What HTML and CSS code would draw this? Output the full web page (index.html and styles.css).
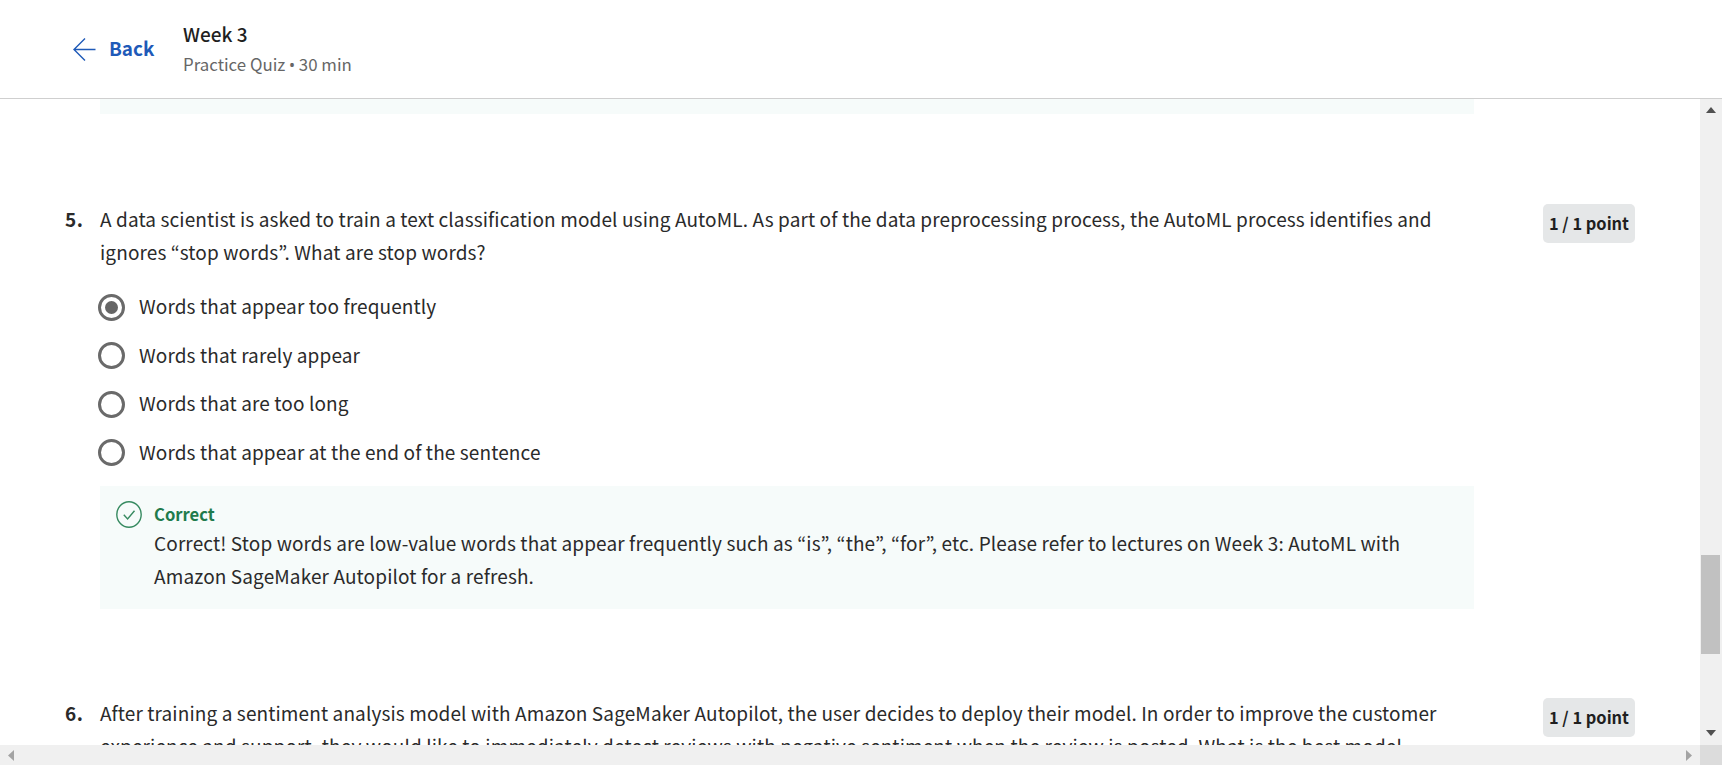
FILE: index.html
```
<!DOCTYPE html>
<html lang="en">
<head>
<meta charset="utf-8">
<title>Week 3 – Practice Quiz</title>
<link rel="stylesheet" href="styles.css">
</head>
<body>
<div class="app">
  <header class="header">
    <a class="back">
      <svg class="back-icon" width="23" height="24" viewBox="0 0 23 24" fill="none" stroke="currentColor" stroke-width="1.4"><path d="M22.5 12.5H1.2M12 1.500 1 12.500l11 11"/></svg>
      <span class="back-label">Back</span>
    </a>
    <div class="titles">
      <h1 class="title">Week 3</h1>
      <p class="subtitle">Practice Quiz <span class="dot">•</span> 30 min</p>
    </div>
  </header>
  <div class="body">
    <main class="content">
      <div class="feedback-tail"></div>
      <section class="question">
        <div class="number">5.</div>
        <div class="main">
          <p class="prompt"><span class="line">A data scientist is asked to train a text classification model using AutoML. As part of the data preprocessing process, the AutoML process identifies and</span> <span class="line">ignores “stop words”. What are stop words?</span></p>
          <div class="options">
            <label class="option"><span class="radio checked"></span><span class="option-text">Words that appear too frequently</span></label>
            <label class="option"><span class="radio"></span><span class="option-text">Words that rarely appear</span></label>
            <label class="option"><span class="radio"></span><span class="option-text">Words that are too long</span></label>
            <label class="option"><span class="radio"></span><span class="option-text">Words that appear at the end of the sentence</span></label>
          </div>
          <div class="feedback">
            <svg class="check" width="26" height="28" viewBox="0 0 26 28" fill="none" stroke="currentColor" stroke-width="1.4"><ellipse cx="13" cy="13.500" rx="12.200" ry="12.700"/><path d="M7.8 13.8l3.800 4.200 6.900-8.200"/></svg>
            <div>
              <h2 class="verdict">Correct</h2>
              <p class="explain"><span class="line">Correct! Stop words are low-value words that appear frequently such as “is”, “the”, “for”, etc. Please refer to lectures on Week 3: AutoML with</span> <span class="line">Amazon SageMaker Autopilot for a refresh.</span></p>
            </div>
          </div>
        </div>
        <div class="points">1 / 1 point</div>
      </section>
      <section class="question">
        <div class="number">6.</div>
        <div class="main">
          <p class="prompt"><span class="line">After training a sentiment analysis model with Amazon SageMaker Autopilot, the user decides to deploy their model. In order to improve the customer</span> <span class="line">experience and support, they would like to immediately detect reviews with negative sentiment when the review is posted. What is the best model</span></p>
        </div>
        <div class="points">1 / 1 point</div>
      </section>
    </main>
    <div class="vbar">
      <svg width="10" height="6" viewBox="0 0 10 6"><path d="M0 6 5 0l5 6z" fill="#505050"/></svg>
      <div class="thumb"></div>
      <svg width="10" height="6" viewBox="0 0 10 6"><path d="M0 0h10L5 6z" fill="#505050"/></svg>
    </div>
  </div>
  <div class="hbar">
    <div class="track">
      <svg width="6" height="11" viewBox="0 0 6 11"><path d="M6 0v11L0 5.500z" fill="#a3a3a3"/></svg>
      <svg width="6" height="11" viewBox="0 0 6 11"><path d="M0 0v11l6-5.500z" fill="#a3a3a3"/></svg>
    </div>
    <div class="corner"></div>
  </div>
</div>
</body>
</html>
```
FILE: styles.css
```
* { box-sizing: border-box; margin: 0; padding: 0; }
body {
  font-family: "Noto Sans CJK KR", "Noto Sans", sans-serif;
  font-size: 19px;
  color: #2a2a2a;
  background: #fff;
}
.app { display: flex; flex-direction: column; width: 1722px; height: 765px; overflow: hidden; }
.header { display: flex; flex: none; height: 99px; border-bottom: 1px solid #cfcfcf; padding-left: 73px; }
.back { display: flex; height: 97px; align-items: center; width: 110px; color: #1f5ab8; }
.back-label { margin-left: 13px; padding-bottom: 2px; font-weight: 700; font-size: 18.900px; line-height: 28px; }
.titles { padding-top: 20px; }
.title { font-size: 19px; line-height: 28px; font-weight: 500; color: #1f1f1f; }
.subtitle { font-size: 16.850px; line-height: 32px; color: #666; }
.dot { font-family: "Noto Sans", sans-serif; font-size: 16px; }
.body { display: flex; flex: 1; min-height: 0; }
.content { width: 1700px; overflow: hidden; }
.feedback-tail { width: 1374px; height: 15px; margin: 0 0 90px 100px; background: #f6fbfa; }
.question { display: flex; height: 494px; padding-left: 65px; }
.number { width: 35px; flex: none; margin-top: -1px; font-weight: 700; line-height: 32px; letter-spacing: 0.500px; }
.main { width: 1374px; flex: none; margin-top: -1px; }
.line { display: block; width: max-content; white-space: nowrap; letter-spacing: 0.120px; }
.line + .line { padding-top: 1px; }
.prompt, .explain { line-height: 32px; }
.options { padding-top: 15px; }
.option { display: flex; align-items: center; height: 48.500px; }
.radio { width: 27px; height: 27px; margin-left: -2px; border: 3px solid #6a6a6a; border-radius: 50%; display: flex; align-items: center; justify-content: center; }
.checked::after { content: ""; width: 13px; height: 13px; border-radius: 50%; background: #666; }
.option-text { margin-left: 14px; padding-bottom: 3px; letter-spacing: 0.120px; }
.feedback { display: flex; height: 123px; margin-top: 9px; padding: 15px 0 0 16px; background: #f6fbfa; }
.check { color: #368a60; margin-right: 12px; flex: none; }
.verdict { font-size: 16.600px; line-height: 26px; font-weight: 700; color: #1f7b4d; }
.points { width: 92px; height: 39px; margin-left: 69px; border-radius: 5px; background: #e5e7e8; font-size: 16.400px; font-weight: 700; line-height: 38px; text-align: center; color: #1f1f1f; white-space: nowrap; }
.vbar { width: 22px; background: #f0f0f0; display: flex; flex-direction: column; align-items: center; padding: 8px 0; }
.thumb { width: 19px; height: 99px; margin: 442px 1px 76px 0; background: #c1c1c1; }
.hbar { display: flex; height: 20px; flex: none; }
.track { width: 1700px; display: flex; justify-content: space-between; align-items: center; padding: 0 8px; background: #f0f0f0; }
.corner { width: 22px; background: #dcdcdc; }
```
